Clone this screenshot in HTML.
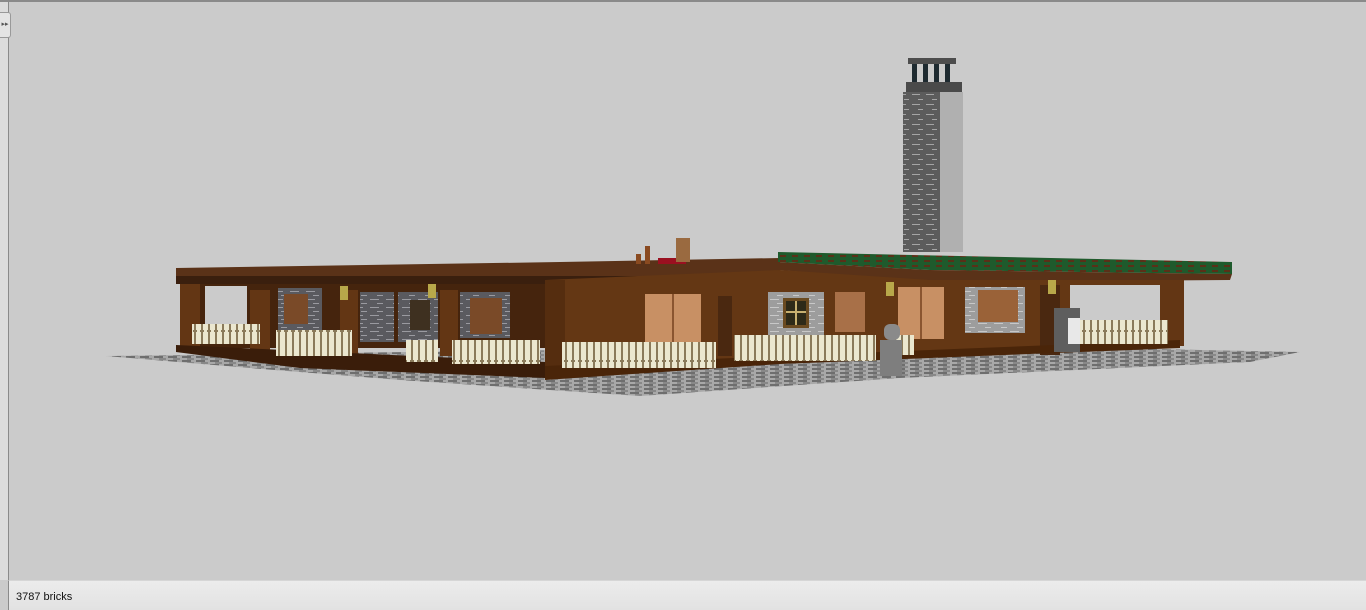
<!DOCTYPE html>
<html><head><meta charset="utf-8"><style>
html,body{margin:0;padding:0;width:1366px;height:609px;overflow:hidden;background:#cbcbcb;font-family:"Liberation Sans",sans-serif}
#top{position:absolute;left:0;top:0;width:1366px;height:2px;background:#8a8a8a}
#lb{position:absolute;left:0;top:2px;width:8px;height:578px;background:#dcdcdc;border-right:1px solid #8a8a8a}
#tab{position:absolute;left:0;top:12px;width:10px;height:24px;background:#e4e4e4;border:1px solid #999;border-left:none;border-radius:0 3px 3px 0;font-size:7px;color:#555;line-height:24px;text-align:center}
#sb{position:absolute;left:8px;top:580px;width:1358px;height:29px;background:linear-gradient(#ececec,#e2e2e2);border-left:1px solid #8a8a8a;border-top:1px solid #d6d6d6}
#sb span{position:absolute;left:7px;top:10px;font-size:11px;color:#111}
svg{position:absolute;left:0;top:0}
</style></head><body>
<div id="top"></div>
<svg width="1366" height="609" viewBox="0 0 1366 609">
<defs>
<pattern id="gr" width="14" height="4" patternUnits="userSpaceOnUse"><rect width="14" height="4" fill="#a8a8a8"/><rect width="9" height="2" fill="#6e6e6e"/><rect x="5" y="2" width="7" height="2" fill="#888"/></pattern>
<pattern id="fn" width="7" height="30" patternUnits="userSpaceOnUse"><rect width="7" height="30" fill="#8a7a5a"/><rect x="0" y="2" width="5" height="30" fill="#ebe7cf"/><rect x="1" y="0" width="3" height="3" fill="#ebe7cf"/></pattern>
<pattern id="br" width="16" height="8" patternUnits="userSpaceOnUse"><rect width="16" height="8" fill="#5a5a5f"/><rect x="2" y="3" width="9" height="1" fill="#9a9aa0"/><rect x="9" y="7" width="6" height="1" fill="#9a9aa0"/></pattern>
<pattern id="br2" width="16" height="8" patternUnits="userSpaceOnUse"><rect width="16" height="8" fill="#9d9d9d"/><rect x="2" y="3" width="9" height="1" fill="#c8c8c8"/><rect x="9" y="7" width="6" height="1" fill="#c8c8c8"/></pattern>
<pattern id="ch" width="14" height="10" patternUnits="userSpaceOnUse"><rect width="14" height="10" fill="#5c5c5c"/><rect x="2" y="4" width="8" height="1" fill="#a5a5a5"/><rect x="8" y="9" width="5" height="1" fill="#a5a5a5"/></pattern>
<pattern id="gn" width="12" height="5" patternUnits="userSpaceOnUse"><rect width="12" height="5" fill="#1f5a2c"/><rect width="6" height="2" fill="#5a3018"/></pattern>
</defs>
<polygon points="106,356 560,350 1100,348 1300,352 1250,362 900,378 640,396 400,380 250,368" fill="url(#gr)"/>
<rect x="903" y="92" width="60" height="160" fill="url(#ch)"/>
<rect x="940" y="92" width="23" height="160" fill="#b0b0b0"/>
<rect x="908" y="58" width="48" height="6" fill="#4d4d4d"/>
<rect x="912" y="64" width="5" height="20" fill="#1e2a30"/><rect x="923" y="64" width="5" height="20" fill="#1e2a30"/><rect x="934" y="64" width="5" height="20" fill="#1e2a30"/><rect x="945" y="64" width="5" height="20" fill="#1e2a30"/>
<rect x="906" y="82" width="56" height="10" fill="#4a4a4a"/>
<polygon points="176,268 560,262 780,258 780,280 560,282 176,276" fill="#5a3218"/>
<rect x="176" y="276" width="604" height="8" fill="#3a1f0e"/>
<rect x="180" y="284" width="370" height="64" fill="#45240d"/>
<rect x="250" y="290" width="20" height="60" fill="#633614"/>
<rect x="180" y="284" width="20" height="66" fill="#633614"/>
<rect x="205" y="286" width="42" height="40" fill="#cbcbcb"/>
<rect x="278" y="288" width="44" height="44" fill="url(#br)"/>
<rect x="284" y="294" width="24" height="30" fill="#7a4a28"/>
<rect x="340" y="290" width="18" height="66" fill="#633614"/>
<rect x="360" y="292" width="34" height="50" fill="url(#br)"/>
<rect x="398" y="292" width="40" height="50" fill="url(#br)"/>
<rect x="410" y="300" width="20" height="30" fill="#3e3020"/>
<rect x="440" y="290" width="18" height="66" fill="#633614"/>
<rect x="460" y="292" width="50" height="46" fill="url(#br)"/>
<rect x="470" y="298" width="32" height="36" fill="#7a4a28"/>
<rect x="340" y="286" width="8" height="14" fill="#b8a84a"/><rect x="428" y="284" width="8" height="14" fill="#b8a84a"/>
<polygon points="545,280 780,270 780,362 545,378" fill="#643714"/>
<rect x="545" y="280" width="20" height="98" fill="#552d0f"/>
<rect x="645" y="294" width="56" height="50" fill="#c89064"/>
<line x1="673" y1="294" x2="673" y2="344" stroke="#8a5530" stroke-width="2"/>
<rect x="718" y="296" width="14" height="60" fill="#4a2810"/>
<polygon points="778,252 1232,262 1232,274 930,270 778,262" fill="url(#gn)"/>
<polygon points="778,262 930,270 1232,274 1230,280 930,282 778,270" fill="#5a3218"/>
<polygon points="780,270 930,280 1180,280 1180,345 930,352 780,362" fill="#643714"/>
<rect x="768" y="292" width="56" height="44" fill="url(#br2)"/>
<rect x="783" y="298" width="26" height="30" fill="#6a4a20"/><rect x="786" y="301" width="20" height="24" fill="#2e2a18"/>
<line x1="796" y1="301" x2="796" y2="325" stroke="#c8b070" stroke-width="2"/><line x1="786" y1="312" x2="806" y2="312" stroke="#c8b070" stroke-width="2"/>
<rect x="835" y="292" width="30" height="40" fill="#a87048"/>
<rect x="898" y="287" width="46" height="52" fill="#c89064"/>
<line x1="921" y1="287" x2="921" y2="339" stroke="#8a5530" stroke-width="2"/>
<rect x="965" y="287" width="60" height="46" fill="url(#br2)"/>
<rect x="978" y="290" width="40" height="32" fill="#9a6238"/>
<rect x="1040" y="285" width="20" height="70" fill="#4a2810"/>
<rect x="1070" y="285" width="90" height="40" fill="#cbcbcb"/>
<rect x="1160" y="280" width="24" height="66" fill="#633614"/>
<rect x="886" y="282" width="8" height="14" fill="#b8a84a"/><rect x="1048" y="280" width="8" height="14" fill="#b8a84a"/>
<polygon points="176,345 545,362 545,378 300,368 176,352" fill="#3a1d0a"/>
<polygon points="545,366 780,356 1180,340 1180,348 780,364 545,380" fill="#4a2509"/>
<rect x="192" y="324" width="68" height="20" fill="url(#fn)"/>
<rect x="276" y="330" width="76" height="26" fill="url(#fn)"/>
<rect x="406" y="340" width="32" height="22" fill="url(#fn)"/>
<rect x="452" y="340" width="88" height="24" fill="url(#fn)"/>
<rect x="562" y="342" width="154" height="26" fill="url(#fn)"/>
<rect x="734" y="335" width="142" height="26" fill="url(#fn)"/>
<rect x="890" y="335" width="24" height="20" fill="url(#fn)"/>
<rect x="1080" y="320" width="88" height="24" fill="url(#fn)"/>
<rect x="884" y="324" width="16" height="16" rx="6" fill="#8a8a8a"/>
<rect x="880" y="340" width="22" height="36" fill="#7e7e7e"/>
<rect x="1054" y="308" width="26" height="44" fill="#5e5e5e"/>
<rect x="1068" y="318" width="12" height="26" fill="#e8e8e8"/>
<rect x="645" y="246" width="5" height="18" fill="#8a4a20"/><rect x="636" y="254" width="5" height="10" fill="#8a4a20"/>
<rect x="658" y="258" width="28" height="6" fill="#9a1020"/>
<rect x="676" y="238" width="14" height="24" fill="#9a6a40"/>
</svg>
<div id="lb"></div>
<div id="tab">&#9656;&#9656;</div>
<div id="sb"><span>3787 bricks</span></div>
</body></html>
